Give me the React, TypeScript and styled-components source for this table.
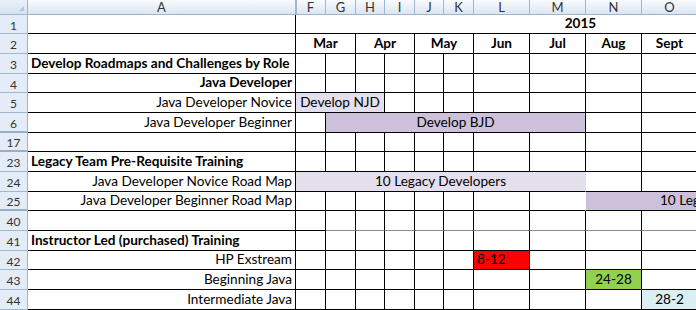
import styled, { createGlobalStyle } from 'styled-components'

const GlobalStyle = createGlobalStyle`
  html, body {
    margin: 0;
    padding: 0;
    background: #fff;
    overflow: hidden;
  }
`

const FONT = `Lato, "Open Sans", "Liberation Sans", sans-serif`
const GRID = '#000'
const HEAD_LINE = '#9eb6ce'

// row header, A, F..K, L..O, then P..R which lie past the window edge
const COLS = [28, 268, 30, 30, 29, 30, 29, 30, 56, 56, 56, 56, 56, 56, 56]
const LETTERS = ['A', 'F', 'G', 'H', 'I', 'J', 'K', 'L', 'M', 'N', 'O', '', '', '']

const Sheet = styled.div`
  display: grid;
  grid-template-columns: ${COLS.map((w) => `${w}px`).join(' ')};
  width: max-content;
  font-family: ${FONT};
  font-size: 13.6px;
  color: #000;
`

const Corner = styled.div`
  position: relative;
  height: 15px;
  box-sizing: border-box;
  background: linear-gradient(#e9f0f9, #d6e2f1);
  border-right: 1px solid ${HEAD_LINE};
  border-bottom: 1px solid ${HEAD_LINE};

  &::after {
    content: '';
    position: absolute;
    right: 3px;
    bottom: 3px;
    border-left: 5px solid transparent;
    border-bottom: 5px solid #b3c6dc;
  }
`

const ColHead = styled.div<{ $hidden?: boolean }>`
  height: 15px;
  box-sizing: border-box;
  display: flex;
  align-items: center;
  justify-content: center;
  font-size: 13px;
  line-height: 1;
  color: #333;
  background: linear-gradient(#f9fbfd 0%, #e9eff7 55%, #dbe4f0 100%);
  border-right: 1px solid ${HEAD_LINE};
  border-bottom: 1px solid ${HEAD_LINE};
  box-shadow: ${({ $hidden }) => ($hidden ? `inset 1px 0 0 ${HEAD_LINE}` : 'none')};
`

const RowHead = styled.div<{ $h: number; $gap?: boolean }>`
  height: ${({ $h }) => $h}px;
  box-sizing: border-box;
  display: flex;
  align-items: center;
  justify-content: center;
  padding-top: 2px;
  font-size: 12px;
  color: #333;
  background: #e4ecf7;
  border-right: 1px solid ${HEAD_LINE};
  border-bottom: ${({ $gap }) => ($gap ? '2px solid #9aaec6' : `1px solid ${HEAD_LINE}`)};
`

type Align = 'left' | 'center' | 'right'

const Cell = styled.div<{
  $h: number
  $span: number
  $align: Align
  $bold?: boolean
  $fill?: string
  $noRight?: boolean
  $bottom?: string
}>`
  grid-column: span ${({ $span }) => $span};
  height: ${({ $h }) => $h}px;
  box-sizing: border-box;
  display: flex;
  align-items: flex-end;
  justify-content: ${({ $align }) =>
    $align === 'left' ? 'flex-start' : $align === 'right' ? 'flex-end' : 'center'};
  padding: 0 3px 1px;
  overflow: hidden;
  white-space: nowrap;
  line-height: 17px;
  font-weight: ${({ $bold }) => ($bold ? 700 : 400)};
  background: ${({ $fill }) => $fill ?? 'transparent'};
  border-right: 1px solid ${({ $noRight }) => ($noRight ? 'transparent' : GRID)};
  border-bottom: 1px solid ${({ $bottom }) => $bottom ?? GRID};
`

type C = {
  span?: number
  text?: string
  align?: Align
  bold?: boolean
  fill?: string
  noRight?: boolean
  bottom?: string
}

const LILAC = '#e4dfec'
const PURPLE = '#ccc0da'

const empty = (n: number, extra: C = {}): C[] => Array.from({ length: n }, () => ({ ...extra }))
const month = (text: string, span = 1): C => ({ text, span, bold: true, align: 'center' })

const rows: { num: number; h: number; gap?: boolean; cells: C[] }[] = [
  { num: 1, h: 19, cells: [{}, { span: 13, text: '2015', bold: true, align: 'center', noRight: true }] },
  {
    num: 2,
    h: 20,
    cells: [
      {},
      month('Mar', 2),
      month('Apr', 2),
      month('May', 2),
      month('Jun'),
      month('Jul'),
      month('Aug'),
      month('Sept'),
      ...empty(3),
    ],
  },
  { num: 3, h: 20, cells: [{ text: 'Develop Roadmaps and Challenges by Role', bold: true, align: 'left' }, ...empty(13)] },
  { num: 4, h: 19, cells: [{ text: 'Java Developer', bold: true, align: 'right' }, ...empty(13)] },
  {
    num: 5,
    h: 20,
    cells: [
      { text: 'Java Developer Novice', align: 'right' },
      { span: 3, text: 'Develop NJD', fill: LILAC },
      ...empty(10),
    ],
  },
  {
    num: 6,
    h: 20,
    gap: true,
    cells: [
      { text: 'Java Developer Beginner', align: 'right' },
      {},
      { span: 7, text: 'Develop BJD', fill: PURPLE },
      ...empty(5),
    ],
  },
  { num: 17, h: 19, gap: true, cells: [{}, ...empty(13)] },
  { num: 23, h: 20, cells: [{ text: 'Legacy Team Pre-Requisite Training', bold: true, align: 'left' }, ...empty(13)] },
  {
    num: 24,
    h: 20,
    cells: [
      { text: 'Java Developer Novice Road Map', align: 'right' },
      { span: 8, text: '10 Legacy Developers', fill: LILAC, noRight: true },
      ...empty(5),
    ],
  },
  {
    num: 25,
    h: 19,
    gap: true,
    cells: [
      { text: 'Java Developer Beginner Road Map', align: 'right' },
      ...empty(7),
      { noRight: true },
      { span: 5, text: '10 Legacy Developers', fill: PURPLE, noRight: true },
    ],
  },
  { num: 40, h: 20, cells: [{}, {}, ...empty(12, { bottom: '#8c8c8c' })] },
  { num: 41, h: 20, cells: [{ text: 'Instructor Led (purchased) Training', bold: true, align: 'left' }, ...empty(13)] },
  {
    num: 42,
    h: 19,
    cells: [
      { text: 'HP Exstream', align: 'right' },
      ...empty(6),
      { text: '8-12', align: 'left', fill: '#ff0000' },
      ...empty(6),
    ],
  },
  {
    num: 43,
    h: 20,
    cells: [{ text: 'Beginning Java', align: 'right' }, ...empty(8), { text: '24-28', fill: '#92d050' }, ...empty(4)],
  },
  {
    num: 44,
    h: 20,
    cells: [{ text: 'Intermediate Java', align: 'right' }, ...empty(9), { text: '28-2', fill: '#daeef3' }, ...empty(3)],
  },
]

export default function App() {
  return (
    <>
      <GlobalStyle />
      <Sheet>
        <Corner />
        {LETTERS.map((l, i) => (
          <ColHead key={i} $hidden={l === 'F'}>
            {l}
          </ColHead>
        ))}
        {rows.map((r) => [
          <RowHead key={`h${r.num}`} $h={r.h} $gap={r.gap}>
            {r.num}
          </RowHead>,
          ...r.cells.map((c, i) => (
            <Cell
              key={`${r.num}-${i}`}
              $h={r.h}
              $span={c.span ?? 1}
              $align={c.align ?? 'center'}
              $bold={c.bold}
              $fill={c.fill}
              $noRight={c.noRight}
              $bottom={c.bottom}
            >
              {c.text}
            </Cell>
          )),
        ])}
      </Sheet>
    </>
  )
}
